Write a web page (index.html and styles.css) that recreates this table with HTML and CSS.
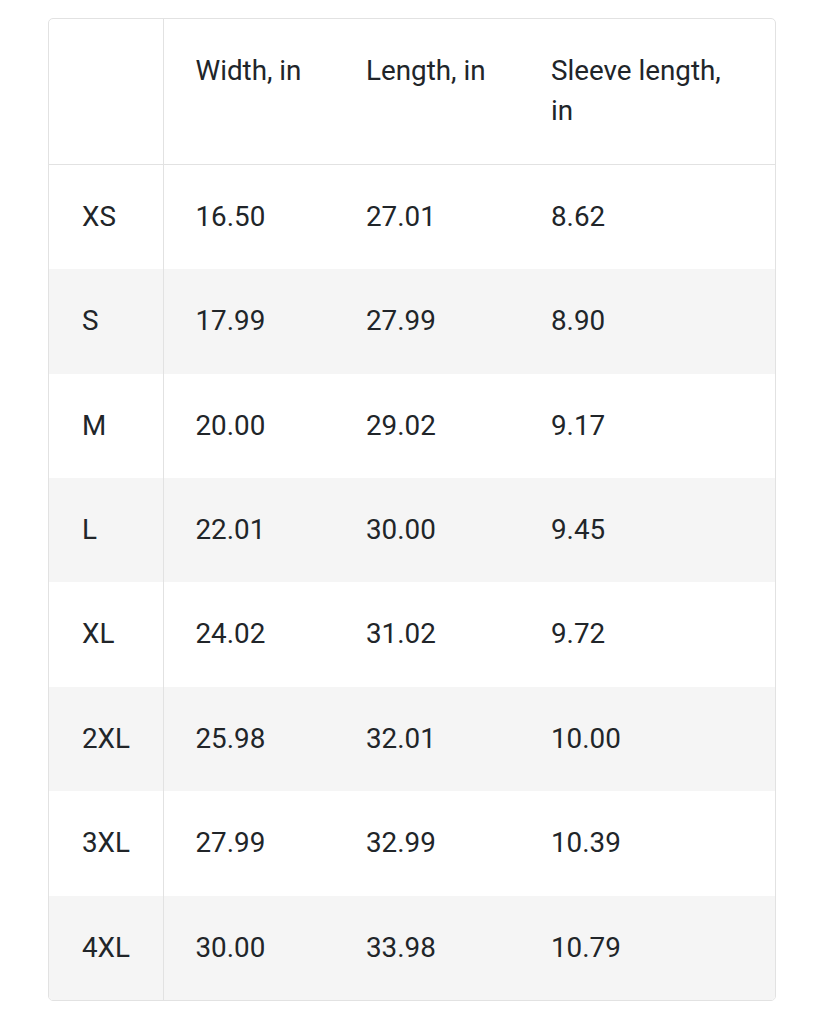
FILE: index.html
```html
<!DOCTYPE html>
<html>
<head>
<meta charset="utf-8">
<link rel="stylesheet" href="styles.css">
</head>
<body>
<div class="wrap">
<table class="sizes">
<colgroup><col class="c1"><col class="c2"><col class="c3"><col class="c4"></colgroup>
<thead>
<tr><th class="first"></th><th>Width, in</th><th>Length, in</th><th>Sleeve length, in</th></tr>
</thead>
<tbody>
<tr><td class="first">XS</td><td>16.50</td><td>27.01</td><td>8.62</td></tr>
<tr><td class="first">S</td><td>17.99</td><td>27.99</td><td>8.90</td></tr>
<tr><td class="first">M</td><td>20.00</td><td>29.02</td><td>9.17</td></tr>
<tr><td class="first">L</td><td>22.01</td><td>30.00</td><td>9.45</td></tr>
<tr><td class="first">XL</td><td>24.02</td><td>31.02</td><td>9.72</td></tr>
<tr><td class="first">2XL</td><td>25.98</td><td>32.01</td><td>10.00</td></tr>
<tr><td class="first">3XL</td><td>27.99</td><td>32.99</td><td>10.39</td></tr>
<tr><td class="first">4XL</td><td>30.00</td><td>33.98</td><td>10.79</td></tr>
</tbody>
</table>
</div>
</body>
</html>
```
FILE: styles.css
```css
html, body { margin: 0; padding: 0; background: #fff; }
body { padding: 18px 0 0 48px; font-family: Roboto, "Liberation Sans", sans-serif; color: #212529; }
.wrap {
  width: 726px;
  border: 1px solid #e2e2e2;
  border-radius: 5px;
  overflow: hidden;
}
.sizes {
  width: 100%;
  border-collapse: collapse;
  table-layout: fixed;
  font-size: 27.8px;
  line-height: 40.4px;
}
.c1 { width: 114px; }
.c2 { width: 171px; }
.c3 { width: 185px; }
.sizes th, .sizes td {
  padding: 32px 16px 32px 32px;
  text-align: left;
  font-weight: 400;
  vertical-align: top;
}
.sizes th:last-child, .sizes td:last-child { padding-right: 36px; }
.sizes td.first, .sizes th.first { padding-left: 33px; border-right: 1px solid #e2e2e2; }
.sizes thead th { border-bottom: 1px solid #e2e2e2; }
.sizes tbody tr:nth-child(even) { background: #f5f5f5; }
```
